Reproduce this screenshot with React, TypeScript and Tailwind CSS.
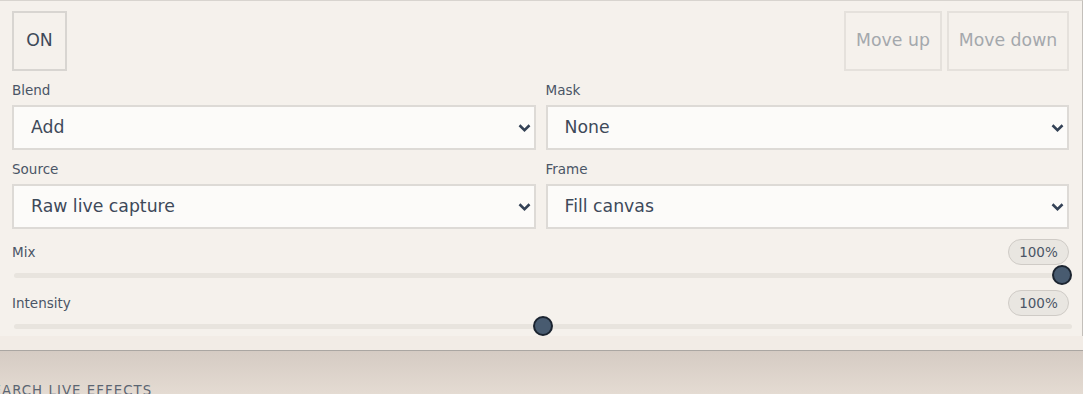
import React from "react";

function Chevron() {
  return (
    <svg
      width="13"
      height="9"
      viewBox="0 0 13 9"
      className="pointer-events-none absolute right-[5px] top-1/2 -translate-y-1/2"
    >
      <path d="M1.5 1.8 L6.5 6.6 L11.5 1.8" fill="none" stroke="#344256" strokeWidth="2.6" />
    </svg>
  );
}

function Field({ label, value }: { label: string; value: string }) {
  return (
    <label className="flex flex-col">
      <span className="text-[13.5px] leading-[18px] text-[#4a5566]">{label}</span>
      <div className="relative mt-[6px]">
        <select
          defaultValue={value}
          className="h-[45px] w-full appearance-none border-2 border-[#dddad6] bg-[#fcfbf9] pl-[17px] text-[17.3px] text-[#3e4959] outline-none"
        >
          <option>{value}</option>
        </select>
        <Chevron />
      </div>
    </label>
  );
}

function Slider({ label, badge, pct }: { label: string; badge: string; pct: number }) {
  return (
    <div className="flex flex-col">
      <div className="flex h-[26px] items-center justify-between">
        <span className="text-[13.5px] text-[#4a5566]">{label}</span>
        <span className="flex h-[26px] w-[61px] items-center justify-center rounded-full border border-[#cfcbc6] bg-[#e9e6e1] text-[13.5px] text-[#4a5566]">
          {badge}
        </span>
      </div>
      <div className="relative ml-[2px] mr-[-3px] h-[20px]">
        <div className="absolute inset-x-0 top-[7.5px] h-[5px] rounded-full bg-[#e8e4de]" />
        <div
          className="absolute top-0 h-[20px] w-[20px] rounded-full border-[2.5px] border-[#1b2430] bg-[#485b70]"
          style={{ left: `calc((100% - 20px) * ${pct / 100})` }}
        />
      </div>
    </div>
  );
}

export default function App() {
  return (
    <div
      className="flex h-[394px] w-full flex-col overflow-hidden bg-[#e6ddd4]"
      style={{ fontFamily: '"DejaVu Sans", sans-serif' }}
    >
      <div className="w-[1083px] shrink-0 border-b border-[#aaa6a2] bg-[#f2ece6] pb-[14px]">
        <div className="w-[1083px] border-r-[1.5px] border-t border-[#d8d4cf] border-r-[#c3bfba] bg-[#f5f1ec] pl-[12px] pr-[13px] pt-[10px]">
          <div className="flex items-start justify-between">
            <button className="flex h-[60px] w-[55px] items-center justify-center border-2 border-[#d8d5d1] text-[17.3px] text-[#3e4959]">
              ON
            </button>
            <div className="flex gap-[5px]">
              <button className="h-[60px] w-[98px] border-2 border-[#e5e1dc] text-[17.3px] text-[#a4a8ac]">
                Move up
              </button>
              <button className="h-[60px] w-[122px] border-2 border-[#e5e1dc] text-[17.3px] text-[#a4a8ac]">
                Move down
              </button>
            </div>
          </div>
          <div className="mt-[10px] grid grid-cols-2 gap-x-[10px] gap-y-[10px]">
            <Field label="Blend" value="Add" />
            <Field label="Mask" value="None" />
            <Field label="Source" value="Raw live capture" />
            <Field label="Frame" value="Fill canvas" />
          </div>
          <div className="mt-[10px] flex flex-col gap-[5px]">
            <Slider label="Mix" badge="100%" pct={100} />
            <Slider label="Intensity" badge="100%" pct={50} />
          </div>
        </div>
      </div>
      <div className="flex-1 bg-gradient-to-b from-[#d5cbc3] to-[#e6ddd4]">
        <div className="ml-[-17px] pt-[32px] text-[13.3px] leading-[16px] tracking-[0.08em] text-[#5b6572]">
          SEARCH LIVE EFFECTS
        </div>
      </div>
    </div>
  );
}
